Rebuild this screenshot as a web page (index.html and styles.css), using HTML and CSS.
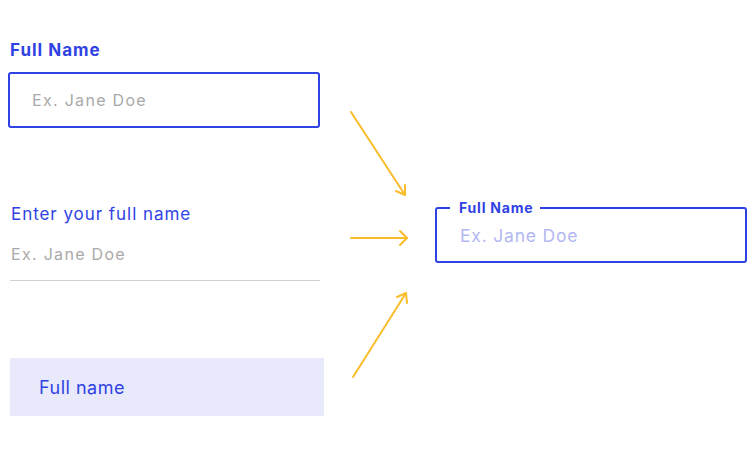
FILE: index.html
```html
<!DOCTYPE html>
<html>
<head>
<meta charset="utf-8">
<link rel="stylesheet" href="styles.css">
</head>
<body>
<div class="page">
  <div class="left">
    <div class="label-bold">Full Name</div>
    <div class="box-outline"><span class="ph">Ex. Jane Doe</span></div>
    <div class="label-line">Enter your full name</div>
    <div class="ph ph-line">Ex. Jane Doe</div>
    <div class="underline"></div>
    <div class="box-filled">Full name</div>
  </div>
  <svg class="arrows" width="100" height="460" viewBox="330 0 100 460" fill="none" stroke="#f9bd2b" stroke-width="2" stroke-linecap="round" stroke-linejoin="round">
    <path d="M351 112 L405 195"/>
    <path d="M396 191 L405 195 L405 185"/>
    <path d="M351 238 L407 238"/>
    <path d="M400 231 L407 238 L400 245"/>
    <path d="M353 377 L406 293"/>
    <path d="M397 297 L406 293 L407 303"/>
  </svg>
  <div class="right">
    <div class="box-float">
      <span class="float-label">Full Name</span>
      <span class="ph ph-blue">Ex. Jane Doe</span>
    </div>
  </div>
</div>
</body>
</html>
```
FILE: styles.css
```css
html, body {
  margin: 0;
  padding: 0;
  background: #ffffff;
}
body {
  font-family: "Inter", "Lato", sans-serif;
  width: 750px;
  height: 460px;
  overflow: hidden;
}
.page {
  display: flex;
  align-items: flex-start;
}
.left {
  width: 330px;
  padding-left: 8px;
  box-sizing: border-box;
  display: flex;
  flex-direction: column;
}
.label-bold {
  color: #3042e3;
  font-weight: 700;
  font-size: 17px;
  letter-spacing: 1px;
  line-height: 20px;
  margin-top: 40px;
  padding-left: 2px;
}
.box-outline {
  margin-top: 12px;
  width: 312px;
  height: 56px;
  box-sizing: border-box;
  border: 2px solid #3042e3;
  border-radius: 3px;
  display: flex;
  align-items: center;
  padding-left: 22px;
}
.ph {
  color: #a9a9a9;
  font-size: 16px;
  letter-spacing: 1.3px;
}
.label-line {
  color: #3042e3;
  font-size: 17px;
  letter-spacing: 0.95px;
  line-height: 20px;
  margin-top: 76px;
  padding-left: 3px;
}
.ph-line {
  margin-top: 20px;
  line-height: 20px;
  padding-left: 3px;
}
.underline {
  margin-top: 16px;
  margin-left: 2px;
  width: 310px;
  height: 1px;
  background: #d2d2d2;
}
.box-filled {
  margin-top: 77px;
  margin-left: 2px;
  width: 314px;
  height: 58px;
  background: #e8eafb;
  color: #3042e3;
  font-size: 18px;
  letter-spacing: 0.5px;
  display: flex;
  align-items: center;
  padding-left: 29px;
  box-sizing: border-box;
}
.arrows {
  display: block;
  flex: none;
}
.right {
  padding-top: 207px;
  padding-left: 5px;
}
.box-float {
  position: relative;
  width: 312px;
  height: 56px;
  box-sizing: border-box;
  border: 2px solid #3042e3;
  border-radius: 3px;
  display: flex;
  align-items: center;
  padding-left: 23px;
}
.float-label {
  position: absolute;
  top: -10px;
  left: 13px;
  padding: 0 7px 0 9px;
  background: #ffffff;
  color: #3042e3;
  font-weight: 700;
  font-size: 14px;
  letter-spacing: 0.8px;
  line-height: 17px;
}
.ph-blue {
  color: #b3b8f3;
  font-size: 17.5px;
  letter-spacing: 0.8px;
}
```
